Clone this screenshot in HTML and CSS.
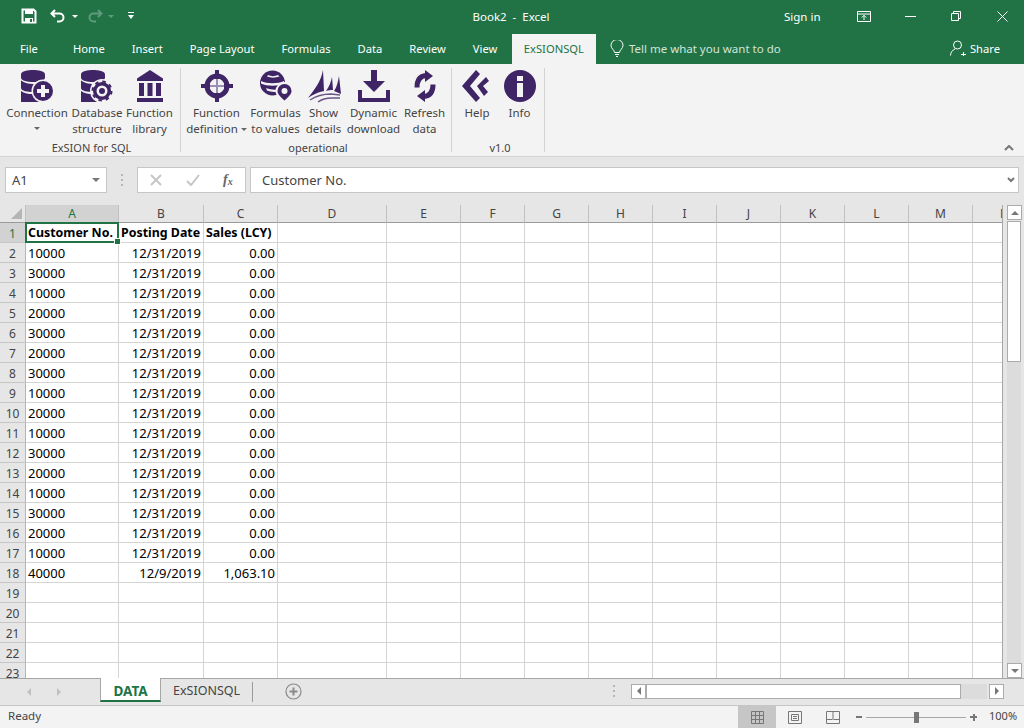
FILE: index.html
```html
<!DOCTYPE html>
<html lang="en">
<head>
<meta charset="UTF-8" />
<title>Book2 - Excel</title>
<link rel="stylesheet" href="styles.css">
</head>
<body>

<div class="app">
    <!-- Title bar -->
    <div class="titlebar">
        <div class="qat">
            <svg class="qat-save" width="16" height="16" viewBox="0 0 16 16"><path d="M1.500 1.500h11l2 2v11h-13z" fill="none" stroke="#fff" stroke-width="2"/><rect x="4" y="2" width="8" height="4" fill="#fff"/><rect x="4" y="10" width="8" height="5" fill="#fff"/><rect x="9" y="11" width="2" height="3" fill="#217346"/></svg>
            <svg class="qat-undo" width="16" height="16" viewBox="0 0 16 16"><path d="M5 2 1.500 5.500 5 9M2 5.500h7.500a4 4 0 0 1 0 8H7" fill="none" stroke="#fff" stroke-width="2"/></svg>
            <span class="caret qat-caret1"></span>
            <svg class="qat-redo" width="16" height="16" viewBox="0 0 16 16"><path d="M11 2l3.500 3.500L11 9M14 5.500H6.500a4 4 0 0 0 0 8H9" fill="none" stroke="#5f9a7d" stroke-width="2"/></svg>
            <span class="caret caret-dim qat-caret2"></span>
            <svg class="qat-custom" width="8" height="8" viewBox="0 0 8 8"><rect x="1" y="0" width="6" height="1" fill="#fff"/><path d="M1 3h6L4 7z" fill="#fff"/></svg>
        </div>
        <div class="doc-title">Book2&nbsp; -&nbsp; Excel</div>
        <div class="window-tools">
            <span class="signin">Sign in</span>
            <svg class="win-ribbon" width="14" height="11" viewBox="0 0 14 11"><path d="M.5.500h13v10H.5zM.5 3h13M7 9V4.500M4.800 6.500 7 4.300l2.200 2.200" fill="none" stroke="#fff"/></svg>
            <svg class="win-min" width="11" height="1" viewBox="0 0 11 1"><rect width="11" height="1" fill="#fff"/></svg>
            <svg class="win-restore" width="10" height="10" viewBox="0 0 10 10"><path d="M.5 2.500h7v7h-7zM2.500 2.500v-2h7v7h-2" fill="none" stroke="#fff"/></svg>
            <svg class="win-close" width="11" height="11" viewBox="0 0 11 11"><path d="M.5.500l10 10M10.500.500l-10 10" stroke="#fff" fill="none"/></svg>
        </div>
    </div>

    <!-- Tabs -->
    <div class="tabs">
        <span class="tab tab-file">File</span>
        <span class="tab">Home</span>
        <span class="tab">Insert</span>
        <span class="tab">Page Layout</span>
        <span class="tab">Formulas</span>
        <span class="tab">Data</span>
        <span class="tab">Review</span>
        <span class="tab">View</span>
        <span class="tab tab-active">ExSIONSQL</span>
        <span class="tell">
            <svg width="14" height="17" viewBox="0 0 14 17"><path d="M4.500 12.500C4.500 10 1 8.500 1 5.500a6 6 0 0 1 12 0c0 3-3.500 4.500-3.500 7zM5 14.500h4M6 16.500h2" fill="none" stroke="#fff"/></svg>
            Tell me what you want to do
        </span>
        <span class="share">
            <svg width="16" height="16" viewBox="0 0 16 16"><circle cx="7.500" cy="5" r="4" fill="none" stroke="#fff"/><path d="M.5 15.500c0-3 2-5.500 4.500-6.500M11 14.500h5M13.500 12v5" fill="none" stroke="#fff"/></svg>
            Share
        </span>
    </div>

    <!-- Ribbon -->
    <div class="ribbon">
        <div class="group group-sql">
            <div class="group-items">
                <div class="rb w-conn">
                    <svg class="icon" width="32" height="32" viewBox="0 0 32 32"><path d="M0 4.500C0 1 7 0 12 0s12 1 12 4.500v3C24 11 17 12 12 12S0 11 0 7.500z"/><path d="M0 10.500C3 13 8 14 12 14s9-1 12-3.500V18c0 3-7 4-12 4S0 21 0 18z"/><path d="M0 21c3 2.500 8 3 12 3s9-.500 12-3v11H0z"/><circle cx="22" cy="21" r="11.500" fill="#f3f3f3"/><circle cx="22" cy="21" r="10"/><path d="M20 15h4v4h4v4h-4v4h-4v-4h-4v-4h4z" fill="#f3f3f3"/></svg>
                    <span>Connection</span>
                    <span class="caret caret-dark caret-line"></span>
                </div>
                <div class="rb w-db">
                    <svg class="icon" width="32" height="32" viewBox="0 0 32 32"><path d="M0 4.500C0 1 7 0 12 0s12 1 12 4.500v3C24 11 17 12 12 12S0 11 0 7.500z"/><path d="M0 10.500C3 13 8 14 12 14s9-1 12-3.500V18c0 3-7 4-12 4S0 21 0 18z"/><path d="M0 21c3 2.500 8 3 12 3s9-.500 12-3v11H0z"/><circle cx="21" cy="21" r="12" fill="#f3f3f3"/><circle cx="21" cy="21" r="9"/><circle cx="21" cy="21" r="9.500" fill="none" stroke-width="2" stroke="#3f2565" stroke-dasharray="3.500 3.960"/><circle cx="21" cy="21" r="5.500" fill="#f3f3f3"/><circle cx="21" cy="21" r="3"/></svg>
                    <span>Database<br>structure</span>
                </div>
                <div class="rb w-lib">
                    <svg class="icon" width="32" height="32" viewBox="0 0 32 32"><path d="M16 0 29 8.500V11H3V8.500z"/><path d="M5 13h5v13H5zM13.500 13h5v13h-5zM22 13h5v13h-5zM3 28h26v4H3z"/></svg>
                    <span>Function<br>library</span>
                </div>
            </div>
            <div class="group-label">ExSION for SQL</div>
        </div>

        <div class="group group-op">
            <div class="group-items">
                <div class="rb w-def">
                    <svg class="icon" width="32" height="32" viewBox="0 0 32 32"><circle cx="16" cy="16" r="10" fill="none" stroke="#3f2565" stroke-width="5"/><path d="M14 0h4v9h-4zM14 23h4v9h-4zM0 14h9v4H0zM23 14h9v4h-9z"/><path d="M15 9h2v14h-2zM9 15h14v2H9z" fill="#9c8fb3"/></svg>
                    <span>Function<br>definition <span class="caret caret-dark"></span></span>
                </div>
                <div class="rb w-form">
                    <svg class="icon" width="32" height="32" viewBox="0 0 32 32"><circle cx="12.500" cy="13" r="12.500"/><path d="M1 11c6 3 17 3 23 0v2.500c-6 3-17 3-23 0zM6 18c5 2 10 2 13 1l-1 2.500c-3 .700-8 .500-11-1zM8 5c3 1.500 7 1.500 10 0l1.500 1.500C15 8 11 8 7 6.500z" fill="#f3f3f3"/><path d="M24.500 12a9 9 0 0 1 9 9c0 4-4 7.500-9 11-5-3.500-9-7-9-11a9 9 0 0 1 9-9z" fill="#f3f3f3"/><path d="M24.500 14a7 7 0 0 1 7 7c0 3-3 6-7 9.500-4-3.500-7-6.500-7-9.500a7 7 0 0 1 7-7z"/><circle cx="24.500" cy="21" r="3" fill="#f3f3f3"/></svg>
                    <span>Formulas<br>to values</span>
                </div>
                <div class="rb w-show">
                    <svg class="icon" width="32" height="32" viewBox="0 0 32 32"><path d="M15 0 16 21C11 22 4 25 0 28 6 20 13 12 15 0z"/><path d="M24 7 25 20C23 20 20 20 18 21 21 17 23 12 24 7z"/><path d="M31 6 33 24 26 21C29 17 30 11 31 6z"/><path d="M2 30C8 26 15 24 23 24L32 25" fill="none" stroke="#6b5488" stroke-width="1.500"/><path d="M10 32C14 29 19 28 24 28H32" fill="none" stroke="#6b5488" stroke-width="1.500"/></svg>
                    <span>Show<br>details</span>
                </div>
                <div class="rb w-dl">
                    <svg class="icon" width="32" height="32" viewBox="0 0 32 32"><path d="M13 0h6v11h8L16 22 5 11h8z"/><path d="M0 20h4v8h24v-8h4v12H0z"/></svg>
                    <span>Dynamic<br>download</span>
                </div>
                <div class="rb w-ref">
                    <svg class="icon" width="32" height="32" viewBox="0 0 32 32"><path d="M8 17.500C8 10 11 6 17 5.500M24 14.500C24 22 21 26 15 26.500" fill="none" stroke="#3f2565" stroke-width="5"/><path d="M16 0l8 6-8 6zM16 32l-8-6 8-6z"/></svg>
                    <span>Refresh<br>data</span>
                </div>
            </div>
            <div class="group-label">operational</div>
        </div>

        <div class="group group-ver">
            <div class="group-items">
                <div class="rb w-help">
                    <svg class="icon" width="32" height="32" viewBox="0 0 32 32"><path d="M1 16 15 0l4 4-10 12 10 12-4 4z"/><path d="M16 16l9-9 3 4-6 5 5 6-4 4z"/></svg>
                    <span>Help</span>
                </div>
                <div class="rb w-info">
                    <svg class="icon" width="32" height="32" viewBox="0 0 32 32"><circle cx="16" cy="16" r="16"/><path d="M13 6h6v5h-6zM13 13h6v14h-6z" fill="#f3f3f3"/></svg>
                    <span>Info</span>
                </div>
            </div>
            <div class="group-label">v1.0</div>
        </div>

        <svg class="collapse" width="10" height="6" viewBox="0 0 10 6"><path d="M1 5l4-4 4 4" fill="none" stroke="#777" stroke-width="2"/></svg>
    </div>

    <!-- Formula bar -->
    <div class="formula-bar">
        <div class="name-box">A1 <span class="caret caret-grey"></span></div>
        <div class="fb-dots"></div>
        <div class="fx-box">
            <svg width="12" height="12" viewBox="0 0 12 12"><path d="M1 1l10 10M11 1 1 11" stroke="#c6c6c6" stroke-width="2" fill="none"/></svg>
            <svg width="14" height="12" viewBox="0 0 14 12"><path d="M1 7l4 4 8-10" stroke="#c6c6c6" stroke-width="2" fill="none"/></svg>
            <span class="fx">f<sub>x</sub></span>
        </div>
        <div class="formula-input">
            Customer No.
            <svg width="8" height="6" viewBox="0 0 8 6"><path d="M1 1l3 3 3-3" fill="none" stroke="#777" stroke-width="2"/></svg>
        </div>
    </div>

    <!-- Sheet -->
    <div class="sheet-area">
        <div class="sheet">
            <table class="grid">
                <colgroup>
                    <col class="c-rh"><col class="c-a"><col class="c-b"><col class="c-c"><col class="c-d"><col class="c-e"><col class="c-n"><col class="c-n"><col class="c-n"><col class="c-n"><col class="c-n"><col class="c-n"><col class="c-n"><col class="c-n"><col class="c-n">
                </colgroup>
                <thead>
                    <tr><th class="corner"></th><th class="on">A</th><th>B</th><th>C</th><th>D</th><th>E</th><th>F</th><th>G</th><th>H</th><th>I</th><th>J</th><th>K</th><th>L</th><th>M</th><th>N</th></tr>
                </thead>
                <tbody>
                    <tr class="bold"><th class="on">1</th><td class="sel">Customer No.</td><td>Posting Date</td><td>Sales (LCY)</td><td></td><td></td><td></td><td></td><td></td><td></td><td></td><td></td><td></td><td></td><td></td></tr>
                    <tr><th>2</th><td>10000</td><td class="r">12/31/2019</td><td class="r">0.00</td><td></td><td></td><td></td><td></td><td></td><td></td><td></td><td></td><td></td><td></td><td></td></tr>
                    <tr><th>3</th><td>30000</td><td class="r">12/31/2019</td><td class="r">0.00</td><td></td><td></td><td></td><td></td><td></td><td></td><td></td><td></td><td></td><td></td><td></td></tr>
                    <tr><th>4</th><td>10000</td><td class="r">12/31/2019</td><td class="r">0.00</td><td></td><td></td><td></td><td></td><td></td><td></td><td></td><td></td><td></td><td></td><td></td></tr>
                    <tr><th>5</th><td>20000</td><td class="r">12/31/2019</td><td class="r">0.00</td><td></td><td></td><td></td><td></td><td></td><td></td><td></td><td></td><td></td><td></td><td></td></tr>
                    <tr><th>6</th><td>30000</td><td class="r">12/31/2019</td><td class="r">0.00</td><td></td><td></td><td></td><td></td><td></td><td></td><td></td><td></td><td></td><td></td><td></td></tr>
                    <tr><th>7</th><td>20000</td><td class="r">12/31/2019</td><td class="r">0.00</td><td></td><td></td><td></td><td></td><td></td><td></td><td></td><td></td><td></td><td></td><td></td></tr>
                    <tr><th>8</th><td>30000</td><td class="r">12/31/2019</td><td class="r">0.00</td><td></td><td></td><td></td><td></td><td></td><td></td><td></td><td></td><td></td><td></td><td></td></tr>
                    <tr><th>9</th><td>10000</td><td class="r">12/31/2019</td><td class="r">0.00</td><td></td><td></td><td></td><td></td><td></td><td></td><td></td><td></td><td></td><td></td><td></td></tr>
                    <tr><th>10</th><td>20000</td><td class="r">12/31/2019</td><td class="r">0.00</td><td></td><td></td><td></td><td></td><td></td><td></td><td></td><td></td><td></td><td></td><td></td></tr>
                    <tr><th>11</th><td>10000</td><td class="r">12/31/2019</td><td class="r">0.00</td><td></td><td></td><td></td><td></td><td></td><td></td><td></td><td></td><td></td><td></td><td></td></tr>
                    <tr><th>12</th><td>30000</td><td class="r">12/31/2019</td><td class="r">0.00</td><td></td><td></td><td></td><td></td><td></td><td></td><td></td><td></td><td></td><td></td><td></td></tr>
                    <tr><th>13</th><td>20000</td><td class="r">12/31/2019</td><td class="r">0.00</td><td></td><td></td><td></td><td></td><td></td><td></td><td></td><td></td><td></td><td></td><td></td></tr>
                    <tr><th>14</th><td>10000</td><td class="r">12/31/2019</td><td class="r">0.00</td><td></td><td></td><td></td><td></td><td></td><td></td><td></td><td></td><td></td><td></td><td></td></tr>
                    <tr><th>15</th><td>30000</td><td class="r">12/31/2019</td><td class="r">0.00</td><td></td><td></td><td></td><td></td><td></td><td></td><td></td><td></td><td></td><td></td><td></td></tr>
                    <tr><th>16</th><td>20000</td><td class="r">12/31/2019</td><td class="r">0.00</td><td></td><td></td><td></td><td></td><td></td><td></td><td></td><td></td><td></td><td></td><td></td></tr>
                    <tr><th>17</th><td>10000</td><td class="r">12/31/2019</td><td class="r">0.00</td><td></td><td></td><td></td><td></td><td></td><td></td><td></td><td></td><td></td><td></td><td></td></tr>
                    <tr><th>18</th><td>40000</td><td class="r">12/9/2019</td><td class="r">1,063.10</td><td></td><td></td><td></td><td></td><td></td><td></td><td></td><td></td><td></td><td></td><td></td></tr>
                    <tr><th>19</th><td></td><td></td><td></td><td></td><td></td><td></td><td></td><td></td><td></td><td></td><td></td><td></td><td></td><td></td></tr>
                    <tr><th>20</th><td></td><td></td><td></td><td></td><td></td><td></td><td></td><td></td><td></td><td></td><td></td><td></td><td></td><td></td></tr>
                    <tr><th>21</th><td></td><td></td><td></td><td></td><td></td><td></td><td></td><td></td><td></td><td></td><td></td><td></td><td></td><td></td></tr>
                    <tr><th>22</th><td></td><td></td><td></td><td></td><td></td><td></td><td></td><td></td><td></td><td></td><td></td><td></td><td></td><td></td></tr>
                    <tr><th>23</th><td></td><td></td><td></td><td></td><td></td><td></td><td></td><td></td><td></td><td></td><td></td><td></td><td></td><td></td></tr>
                </tbody>
            </table>
        </div>
        <div class="vscroll">
            <div class="sb-btn"><span class="tri tri-up"></span></div>
            <div class="v-thumb"></div>
            <div class="v-track"></div>
            <div class="sb-btn"><span class="tri tri-down"></span></div>
        </div>
    </div>

    <!-- Sheet tabs -->
    <div class="sheet-tabs">
        <div class="tab-nav">
            <span class="tri tri-left tri-faint"></span>
            <span class="tri tri-right tri-faint"></span>
        </div>
        <div class="stab stab-active">DATA</div>
        <div class="stab">ExSIONSQL</div>
        <div class="stab-sep"></div>
        <svg class="add-sheet" width="17" height="17" viewBox="0 0 17 17"><circle cx="8.500" cy="8.500" r="7.500" fill="none" stroke="#8a8a8a" stroke-width="1.200"/><path d="M8.500 4.500v8M4.500 8.500h8" stroke="#8a8a8a" stroke-width="2"/></svg>
        <div class="split-dots"></div>
        <div class="hscroll">
            <div class="sb-btn"><span class="tri tri-left"></span></div>
            <div class="h-thumb"></div>
            <div class="h-track"></div>
            <div class="sb-btn"><span class="tri tri-right"></span></div>
        </div>
    </div>

    <!-- Status bar -->
    <div class="statusbar">
        <span class="ready">Ready</span>
        <div class="view-btn view-on">
            <svg width="13" height="13" viewBox="0 0 13 13"><path d="M.5.500h12v12H.5zM4.500.500v12M8.500.500v12M.5 4.500h12M.5 8.500h12" fill="none" stroke="#777"/></svg>
        </div>
        <div class="view-btn">
            <svg width="14" height="13" viewBox="0 0 14 13"><path d="M.5.500h13v12H.5zM3.500 3.500h7v6h-7zM5 5.500h4M5 7.500h4" fill="none" stroke="#777"/></svg>
        </div>
        <div class="view-btn">
            <svg width="14" height="13" viewBox="0 0 14 13"><path d="M.5.500h13v12H.5zM.5 8.500h6M7 .500v8M13.500 8.500h-6" fill="none" stroke="#777"/></svg>
        </div>
        <div class="zoom">
            <span class="z-minus"></span>
            <div class="z-line"><span class="z-thumb"></span></div>
            <span class="z-plus"></span>
        </div>
        <span class="zoom-val">100%</span>
    </div>
</div>

</body>
</html>
```

FILE: styles.css
```css
* {
    box-sizing: border-box;
}

body {
    margin: 0;
    font-family: 'Noto Sans', 'Open Sans', sans-serif;
    font-size: 11.5px;
    color: #444;
    background: #e6e6e6;
    overflow: hidden;
}

.app {
    width: 1024px;
    height: 728px;
    display: flex;
    flex-direction: column;
    overflow: hidden;
}

/* Title bar */
.titlebar {
    height: 32px;
    background: #217346;
    color: #fff;
    display: flex;
    align-items: center;
    position: relative;
}

.qat {
    display: flex;
    align-items: center;
    padding-left: 21px;
    width: 400px;
}

.qat-undo { margin-left: 13px; }
.qat-caret1 { margin-left: 6px; }
.qat-redo { margin-left: 9px; }
.qat-caret2 { margin-left: 5px; }
.qat-custom { margin-left: 13px; }

.caret {
    display: inline-block;
    width: 0;
    height: 0;
    border-left: 3px solid transparent;
    border-right: 3px solid transparent;
    border-top: 3px solid #fff;
    vertical-align: middle;
}

.caret-dim { border-top-color: #5f9a7d; }
.caret-dark { border-top-color: #666; }

.caret-grey {
    border-left-width: 4px;
    border-right-width: 4px;
    border-top: 4px solid #777;
}

.doc-title {
    width: 222px;
    text-align: center;
}

.window-tools {
    flex: 1;
    display: flex;
    align-items: center;
    padding-left: 162px;
}

.win-ribbon { margin-left: 36px; }
.win-min { margin-left: 34px; }
.win-restore { margin-left: 35px; }
.win-close { margin-left: 36px; }

/* Tabs */
.tabs {
    height: 32px;
    background: #217346;
    color: #fff;
    display: flex;
    align-items: flex-end;
    white-space: nowrap;
    font-size: 11.2px;
}

.tab {
    height: 30px;
    padding: 0 13.5px;
    line-height: 29px;
}

.tab-file {
    padding-left: 20px;
    padding-right: 21.5px;
}

.tab-active {
    margin-left: 1px;
    padding: 0 12px;
    background: #f3f3f3;
    color: #217346;
}

.tell {
    height: 30px;
    display: flex;
    align-items: center;
    gap: 5px;
    margin-left: 14px;
    padding-bottom: 2px;
    color: #d3e3da;
    font-size: 11.5px;
}

.share {
    height: 30px;
    display: flex;
    align-items: center;
    gap: 4px;
    margin-left: auto;
    padding: 0 24px 2px 0;
}

/* Ribbon */
.ribbon {
    height: 93px;
    background: #f3f3f3;
    border-bottom: 1px solid #d2d2d2;
    display: flex;
    padding: 4px 0 0 3px;
    position: relative;
}

.group {
    height: 84px;
    border-right: 1px solid #d2d2d2;
    display: flex;
    flex-direction: column;
}

.group-sql { width: 178px; }
.group-op { width: 271px; padding-left: 4px; }
.group-ver { width: 93px; padding-left: 4px; }

.group-items {
    display: flex;
    height: 72px;
}

.group-label {
    height: 12px;
    line-height: 16px;
    text-align: center;
    font-size: 11px;
}

.rb {
    padding-top: 2px;
    text-align: center;
    line-height: 16px;
    white-space: nowrap;
}

.icon {
    display: block;
    margin: 0 auto 3px;
    fill: #3f2565;
    overflow: visible;
}

.caret-line {
    display: block;
    margin: 6px auto 0;
}

.w-conn { width: 68px; }
.w-db { width: 52px; }
.w-lib { width: 53px; }
.w-def { width: 63px; }
.w-form { width: 55px; }
.w-show { width: 41px; }
.w-dl { width: 59px; }
.w-ref { width: 43px; }
.w-help { width: 42px; }
.w-info { width: 43px; }

.collapse {
    position: absolute;
    right: 10px;
    bottom: 5px;
}

/* Formula bar */
.formula-bar {
    height: 48px;
    padding: 10px 5px 0;
    display: flex;
    align-items: flex-start;
    background: #e6e6e6;
}

.name-box,
.fx-box,
.formula-input {
    height: 26px;
    background: #fff;
    border: 1px solid #c6c6c6;
    display: flex;
    align-items: center;
}

.name-box {
    width: 102px;
    padding: 0 6px;
    font-size: 13px;
    justify-content: space-between;
}

.fb-dots {
    width: 2px;
    height: 12px;
    margin: 7px 14px 0 14px;
    background: repeating-linear-gradient(#b5b5b5 0 2px, transparent 2px 5px);
}

.fx-box {
    width: 109px;
    padding-left: 12px;
    gap: 24px;
    margin-right: 4px;
}

.fx {
    font-family: 'Liberation Serif', serif;
    font-style: italic;
    font-weight: bold;
    font-size: 14px;
    color: #666;
    margin-left: -1px;
}

.fx sub {
    font-size: 10px;
    line-height: 0;
    vertical-align: -1px;
}

.formula-input {
    flex: 1;
    padding: 0 3px 0 11px;
    font-size: 13px;
    justify-content: space-between;
}

/* Sheet */
.sheet-area {
    flex: 1;
    display: flex;
    min-height: 0;
}

.sheet {
    width: 1002px;
    overflow: hidden;
}

.grid {
    border-collapse: separate;
    border-spacing: 0;
    table-layout: fixed;
    width: 1037px;
    background: #fff;
    font-size: 13px;
    color: #000;
}

.c-rh { width: 26px; }
.c-a { width: 93px; }
.c-b { width: 85px; }
.c-c { width: 74px; }
.c-d { width: 109px; }
.c-e { width: 74px; }
.c-n { width: 64px; }

.grid tr {
    height: 20px;
}

.grid thead tr {
    height: 18px;
}

.grid th {
    padding: 0;
    font-weight: normal;
    font-size: 12px;
    color: #444;
    background: #e6e6e6;
    text-align: center;
    border-right: 1px solid #b5b5b5;
    border-bottom: 1px solid #b5b5b5;
}

.grid tbody th {
    border-bottom-color: #c6c6c6;
    padding-top: 1px;
}

.grid thead th {
    border-bottom-color: #9a9a9a;
    border-right-color: #c0c0c0;
}

.grid th.on {
    background: #d2d2d2;
    color: #217346;
}

.corner {
    position: relative;
}

.corner::after {
    content: "";
    position: absolute;
    right: 3px;
    bottom: 3px;
    border-left: 11px solid transparent;
    border-bottom: 11px solid #b5b5b5;
}

.grid td {
    padding: 1px 2px 0 2px;
    border-right: 1px solid #d4d4d4;
    border-bottom: 1px solid #d4d4d4;
    white-space: nowrap;
    line-height: 18px;
    overflow: hidden;
}

.grid td.r {
    text-align: right;
}

.bold td {
    font-weight: bold;
    font-size: 12.4px;
}

.grid td.sel {
    position: relative;
    overflow: visible;
}

.sel::before {
    content: "";
    position: absolute;
    left: -1px;
    top: -1px;
    right: -1px;
    bottom: -1px;
    border: 2px solid #217346;
}

.sel::after {
    content: "";
    position: absolute;
    right: -3px;
    bottom: -3px;
    width: 5px;
    height: 5px;
    background: #217346;
    border: 1px solid #fff;
}

/* Scrollbars */
.vscroll {
    width: 22px;
    background: #e6e6e6;
    border-left: 1px solid #a6a6a6;
    padding: 0 3px 0 4px;
    display: flex;
    flex-direction: column;
}

.sb-btn {
    width: 15px;
    height: 15px;
    background: #fff;
    border: 1px solid #ababab;
    display: flex;
    align-items: center;
    justify-content: center;
    flex: none;
}

.v-thumb {
    height: 141px;
    margin-top: 1px;
    background: #fff;
    border: 1px solid #ababab;
}

.v-track {
    flex: 1;
    background: #dcdcdc;
}

.tri {
    width: 0;
    height: 0;
    display: inline-block;
}

.tri-up {
    border-left: 4px solid transparent;
    border-right: 4px solid transparent;
    border-bottom: 4px solid #777;
}

.tri-down {
    border-left: 4px solid transparent;
    border-right: 4px solid transparent;
    border-top: 4px solid #777;
}

.tri-left {
    border-top: 4px solid transparent;
    border-bottom: 4px solid transparent;
    border-right: 4px solid #777;
}

.tri-right {
    border-top: 4px solid transparent;
    border-bottom: 4px solid transparent;
    border-left: 4px solid #777;
}

.tri-faint { opacity: 0.35; }

/* Sheet tabs */
.sheet-tabs {
    height: 28px;
    background: #e6e6e6;
    border-top: 1px solid #a6a6a6;
    border-bottom: 1px solid #c6c6c6;
    display: flex;
    align-items: stretch;
}

.tab-nav {
    width: 100px;
    display: flex;
    align-items: center;
    padding-left: 27px;
    gap: 26px;
}

.stab {
    padding: 0 12px;
    font-size: 12.5px;
    line-height: 24px;
    color: #444;
}

.stab-active {
    width: 61px;
    margin-top: -1px;
    height: 24px;
    background: #fff;
    border: 1px solid #a6a6a6;
    border-top: 0;
    border-bottom: 2px solid #217346;
    color: #217346;
    font-weight: bold;
    text-align: center;
    padding: 1px 0 0;
    font-size: 13.5px;
}

.stab-sep {
    width: 1px;
    height: 20px;
    margin: 3px 0 0;
    background: #9a9a9a;
}

.add-sheet {
    margin: 4px 0 0 32px;
}

.split-dots {
    width: 2px;
    height: 12px;
    margin: 6px 0 0 311px;
    background: repeating-linear-gradient(#b5b5b5 0 2px, transparent 2px 5px);
}

.hscroll {
    display: flex;
    align-items: center;
    margin: 0 0 2px 16px;
    width: 373px;
}

.h-thumb {
    width: 315px;
    height: 15px;
    background: #fff;
    border: 1px solid #ababab;
}

.h-track {
    flex: 1;
    height: 15px;
    background: #dcdcdc;
    margin-right: 2px;
}

/* Status bar */
.statusbar {
    height: 22px;
    background: #f3f3f3;
    display: flex;
    align-items: center;
    flex: none;
}

.ready {
    width: 738px;
    padding: 0 0 3px 8px;
}

.view-btn {
    width: 38px;
    height: 22px;
    display: flex;
    align-items: center;
    justify-content: center;
}

.view-on {
    background: #c6c6c6;
}

.zoom {
    display: flex;
    align-items: center;
    margin-left: 4px;
    width: 128px;
}

.z-minus {
    width: 6px;
    height: 2px;
    background: #777;
}

.z-line {
    position: relative;
    width: 100px;
    height: 1px;
    margin: 0 4px;
    background: #a6a6a6;
}

.z-thumb {
    position: absolute;
    left: 48px;
    top: -5px;
    width: 5px;
    height: 11px;
    background: #777;
}

.z-plus {
    width: 7px;
    height: 7px;
    background:
        linear-gradient(#777, #777) center / 7px 2px no-repeat,
        linear-gradient(#777, #777) center / 2px 7px no-repeat;
}

.zoom-val {
    margin-left: 5px;
    padding-bottom: 3px;
    font-size: 11px;
}
```
